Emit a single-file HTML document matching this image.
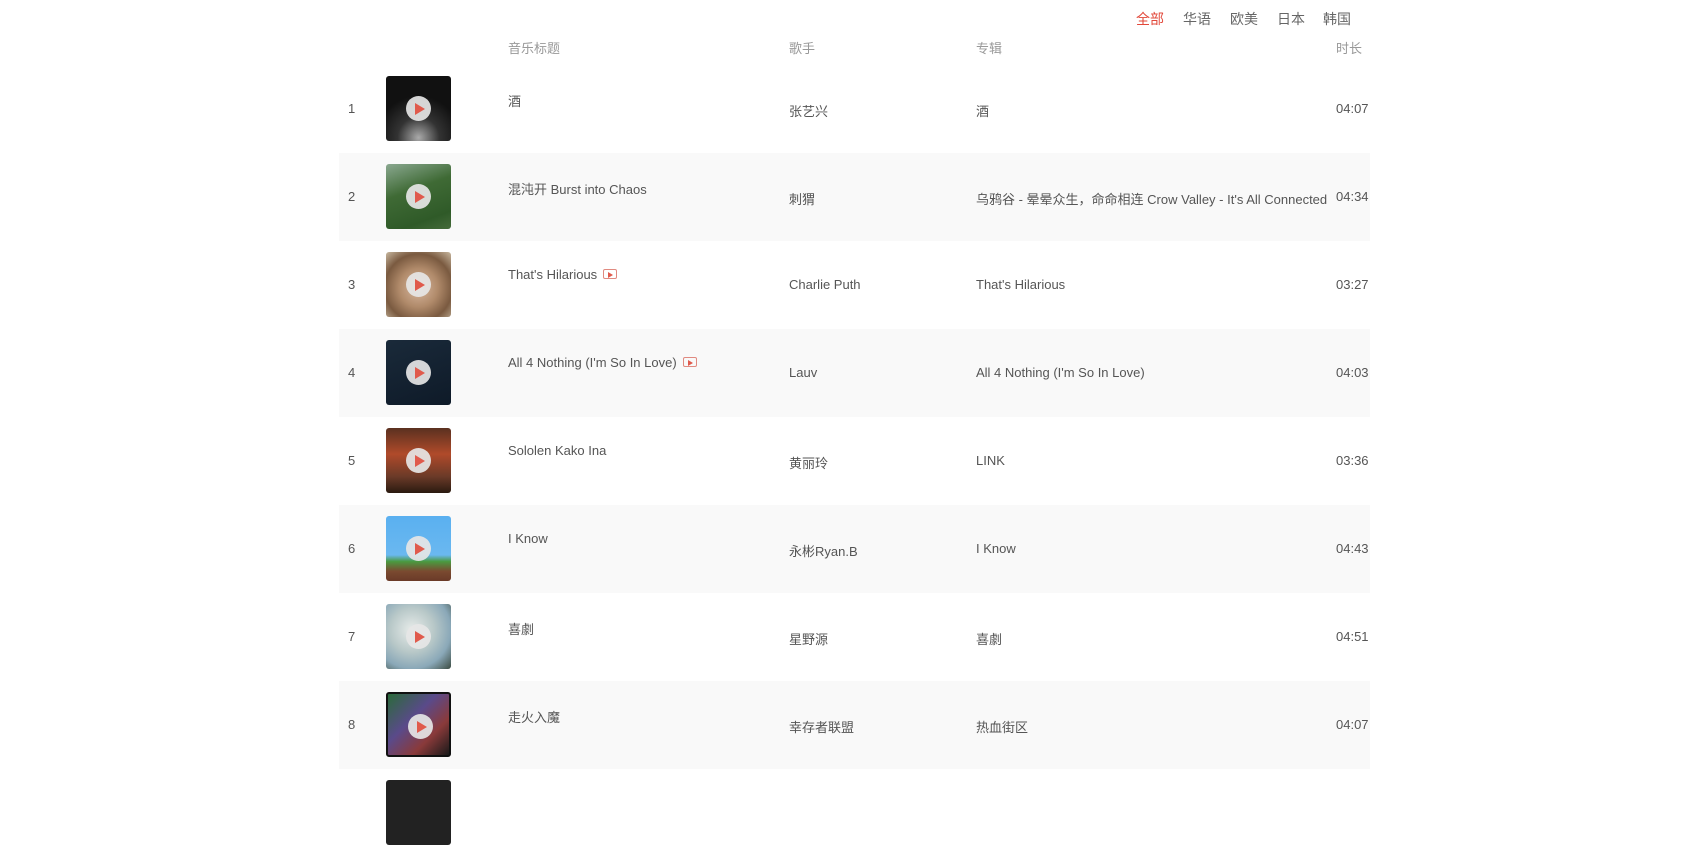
<!DOCTYPE html>
<html><head><meta charset="utf-8"><style>
*{margin:0;padding:0;box-sizing:border-box}
body{width:1705px;height:784px;overflow:hidden;background:#fff;font-family:"Liberation Sans","Noto Sans CJK SC",sans-serif;font-size:13px;color:#555;position:relative}
.f{position:absolute;top:9px;font-size:14px;color:#666}
.h{position:absolute;top:38px;color:#999;font-size:13px}
.row{position:absolute;left:339px;width:1031px;height:88px}
.row.g{background:#f9f9f9}
.row span{position:absolute;white-space:nowrap}
.n{left:9px;top:36px}
.img{position:absolute;left:47px;top:11px;width:65px;height:65px;border-radius:3px}
.pl{position:absolute;left:20px;top:20px;width:25px;height:25px;border-radius:50%;background:rgba(230,230,230,.92)}
.pl:after{content:"";position:absolute;left:9px;top:6.5px;border-left:10px solid #e05a4c;border-top:6px solid transparent;border-bottom:6px solid transparent}
.t{left:169px;top:26px}
.s{left:450px;top:36px}
.a{left:637px;top:36px}
.d{left:997px;top:36px}
.mv{display:inline-block;width:14px;height:10px;border:1px solid #e08a80;border-radius:2px;margin-left:6px;position:relative;top:0}
.mv:after{content:"";position:absolute;left:4px;top:1.5px;border-left:5px solid #e05a4c;border-top:3px solid transparent;border-bottom:3px solid transparent}
</style></head><body>
<span class="f" style="left:1136px;color:#e2483a">全部</span>
<span class="f" style="left:1183px">华语</span>
<span class="f" style="left:1230px">欧美</span>
<span class="f" style="left:1277px">日本</span>
<span class="f" style="left:1323px">韩国</span>
<span class="h" style="left:508px">音乐标题</span>
<span class="h" style="left:789px">歌手</span>
<span class="h" style="left:976px">专辑</span>
<span class="h" style="left:1336px">时长</span>

<div class="row" style="top:65px"><span class="n">1</span><div class="img" style="background:radial-gradient(circle at 50% 95%,#aaa 0,#333 30%,#111 60%)"><div class="pl"></div></div><span class="t">酒</span><span class="s">张艺兴</span><span class="a">酒</span><span class="d">04:07</span></div>
<div class="row g" style="top:153px"><span class="n">2</span><div class="img" style="background:linear-gradient(160deg,#8aa890,#3f6a35 40%,#2f5a28 80%,#456b3a)"><div class="pl"></div></div><span class="t">混沌开 Burst into Chaos</span><span class="s">刺猬</span><span class="a">乌鸦谷 - 晕晕众生，命命相连 Crow Valley - It's All Connected</span><span class="d">04:34</span></div>
<div class="row" style="top:241px"><span class="n">3</span><div class="img" style="background:radial-gradient(circle at 50% 55%,#d8b8a0 0,#b08a6a 40%,#7a5a40 70%,#c8b8a0)"><div class="pl"></div></div><span class="t">That's Hilarious<i class="mv"></i></span><span class="s">Charlie Puth</span><span class="a">That's Hilarious</span><span class="d">03:27</span></div>
<div class="row g" style="top:329px"><span class="n">4</span><div class="img" style="background:linear-gradient(160deg,#1a2a3a,#0e1a28)"><div class="pl"></div></div><span class="t">All 4 Nothing (I'm So In Love)<i class="mv"></i></span><span class="s">Lauv</span><span class="a">All 4 Nothing (I'm So In Love)</span><span class="d">04:03</span></div>
<div class="row" style="top:417px"><span class="n">5</span><div class="img" style="background:linear-gradient(180deg,#5a3020,#b04a2a 40%,#6a3a28 75%,#2a1a10)"><div class="pl"></div></div><span class="t">Sololen Kako Ina</span><span class="s">黄丽玲</span><span class="a">LINK</span><span class="d">03:36</span></div>
<div class="row g" style="top:505px"><span class="n">6</span><div class="img" style="background:linear-gradient(180deg,#5ab0f0 0,#6ab8f0 60%,#4a9a40 70%,#7a4a30 85%,#6a3a28)"><div class="pl"></div></div><span class="t">I Know</span><span class="s">永彬Ryan.B</span><span class="a">I Know</span><span class="d">04:43</span></div>
<div class="row" style="top:593px"><span class="n">7</span><div class="img" style="background:radial-gradient(circle at 40% 40%,#e8ecea 0,#b8c8c8 40%,#8aa8b8 70%,#3a4a40)"><div class="pl"></div></div><span class="t">喜劇</span><span class="s">星野源</span><span class="a">喜劇</span><span class="d">04:51</span></div>
<div class="row g" style="top:681px"><span class="n">8</span><div class="img" style="background:linear-gradient(135deg,#2a6a3a,#5a4a8a 40%,#8a3a3a 70%,#1a1a1a);border:2px solid #111"><div class="pl"></div></div><span class="t">走火入魔</span><span class="s">幸存者联盟</span><span class="a">热血街区</span><span class="d">04:07</span></div>
<div class="row" style="top:769px"><div class="img" style="background:#222"></div></div>
</body></html>
